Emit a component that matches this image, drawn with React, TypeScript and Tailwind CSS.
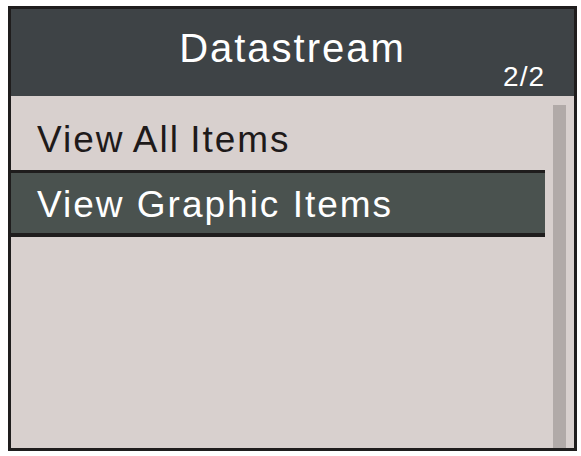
export default function App() {
  return (
    <div className="w-[581px] h-[456px] bg-white pt-[6px] pl-[8px] font-['Liberation_Sans',Arial,sans-serif]">
      <div className="w-[569px] h-[445px] border-[3px] border-[#1f1d1d] flex flex-col bg-[#d8d0ce]">
        <div className="relative h-[87px] bg-[#3e4346] text-white">
          <div className="pt-[19px] text-center text-[40px] leading-[40px] tracking-[2px]">
            Datastream
          </div>
          <div className="absolute top-[54px] right-[29px] text-[28px] leading-[28px] tracking-[1px]">
            2/2
          </div>
        </div>
        <div className="flex flex-1">
          <div className="w-[534px] flex flex-col">
            <div className="h-[74px] pt-[25px] pl-[26px] text-[37px] leading-[37px] tracking-[2px] [word-spacing:-2px] text-[#1e1a1a]">
              View All Items
            </div>
            <div className="h-[67px] border-t-[3px] border-b-[4px] border-[#1f1d1d] bg-[#4a524f] pt-[13px] pl-[26px] text-[37px] leading-[37px] tracking-[2px] text-white">
              View Graphic Items
            </div>
          </div>
          <div className="ml-[8px] mt-[9px] w-[13px] bg-[#b1aaa8]" />
        </div>
      </div>
    </div>
  );
}
